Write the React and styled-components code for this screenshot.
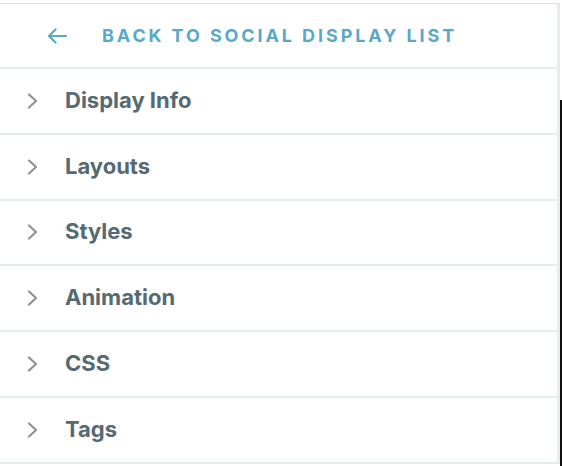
import React from 'react'
import styled, { createGlobalStyle } from 'styled-components'

const GlobalStyle = createGlobalStyle`
  html, body {
    margin: 0;
    padding: 0;
    background: #fff;
  }
  body {
    font-family: Inter, "Liberation Sans", Arial, sans-serif;
  }
`

const sections = ['Display Info', 'Layouts', 'Styles', 'Animation', 'CSS', 'Tags']

const App = () => {
  return (
    <Page>
      <GlobalStyle />
      <Panel>
        <BackBar>
          <BackIcon viewBox="0 0 20 16" aria-hidden="true">
            <path d="M19 8H2M8.5 1.5L2 8l6.5 6.5" />
          </BackIcon>
          <BackLabel>Back to Social Display List</BackLabel>
        </BackBar>
        {sections.map((title) => (
          <SectionRow key={title}>
            <Chevron viewBox="0 0 11 16" aria-hidden="true">
              <path d="M2 1.5L9 8l-7 6.5" />
            </Chevron>
            <SectionTitle>{title}</SectionTitle>
          </SectionRow>
        ))}
      </Panel>
      <EdgeStrip />
    </Page>
  )
}

export default App

const Page = styled.div`
  display: flex;
  align-items: flex-start;
  width: 562px;
  padding-top: 3px;
`
const Panel = styled.div`
  width: 557px;
  flex-shrink: 0;
  border-top: 1px solid #dedede;
  border-right: 3px solid #e4ecf0;
  background: #fff;
`
const EdgeStrip = styled.div`
  width: 2px;
  height: 370px;
  margin-top: 97px;
  background: #111;
`
const BackBar = styled.div`
  display: flex;
  align-items: center;
  height: 63px;
  padding-left: 47px;
  border-bottom: 2px solid #e6edf1;
`
const BackIcon = styled.svg`
  width: 20px;
  height: 16px;
  margin-right: 35px;
  fill: none;
  stroke: #58a9c9;
  stroke-width: 2.2;
  stroke-linecap: round;
  stroke-linejoin: round;
`
const BackLabel = styled.span`
  font-size: 18px;
  font-weight: 700;
  letter-spacing: 2.9px;
  text-transform: uppercase;
  color: #58a9c9;
`
const SectionRow = styled.div`
  display: flex;
  align-items: center;
  box-sizing: border-box;
  height: 65.8px;
  padding: 0 0 2px 27px;
  border-bottom: 2px solid #e6edf1;
`
const Chevron = styled.svg`
  width: 11px;
  height: 16px;
  margin: 2px 27px 0 0;
  fill: none;
  stroke: #929292;
  stroke-width: 2.2;
  stroke-linecap: round;
  stroke-linejoin: round;
`
const SectionTitle = styled.span`
  font-size: 22px;
  font-weight: 700;
  color: #556a72;
`
